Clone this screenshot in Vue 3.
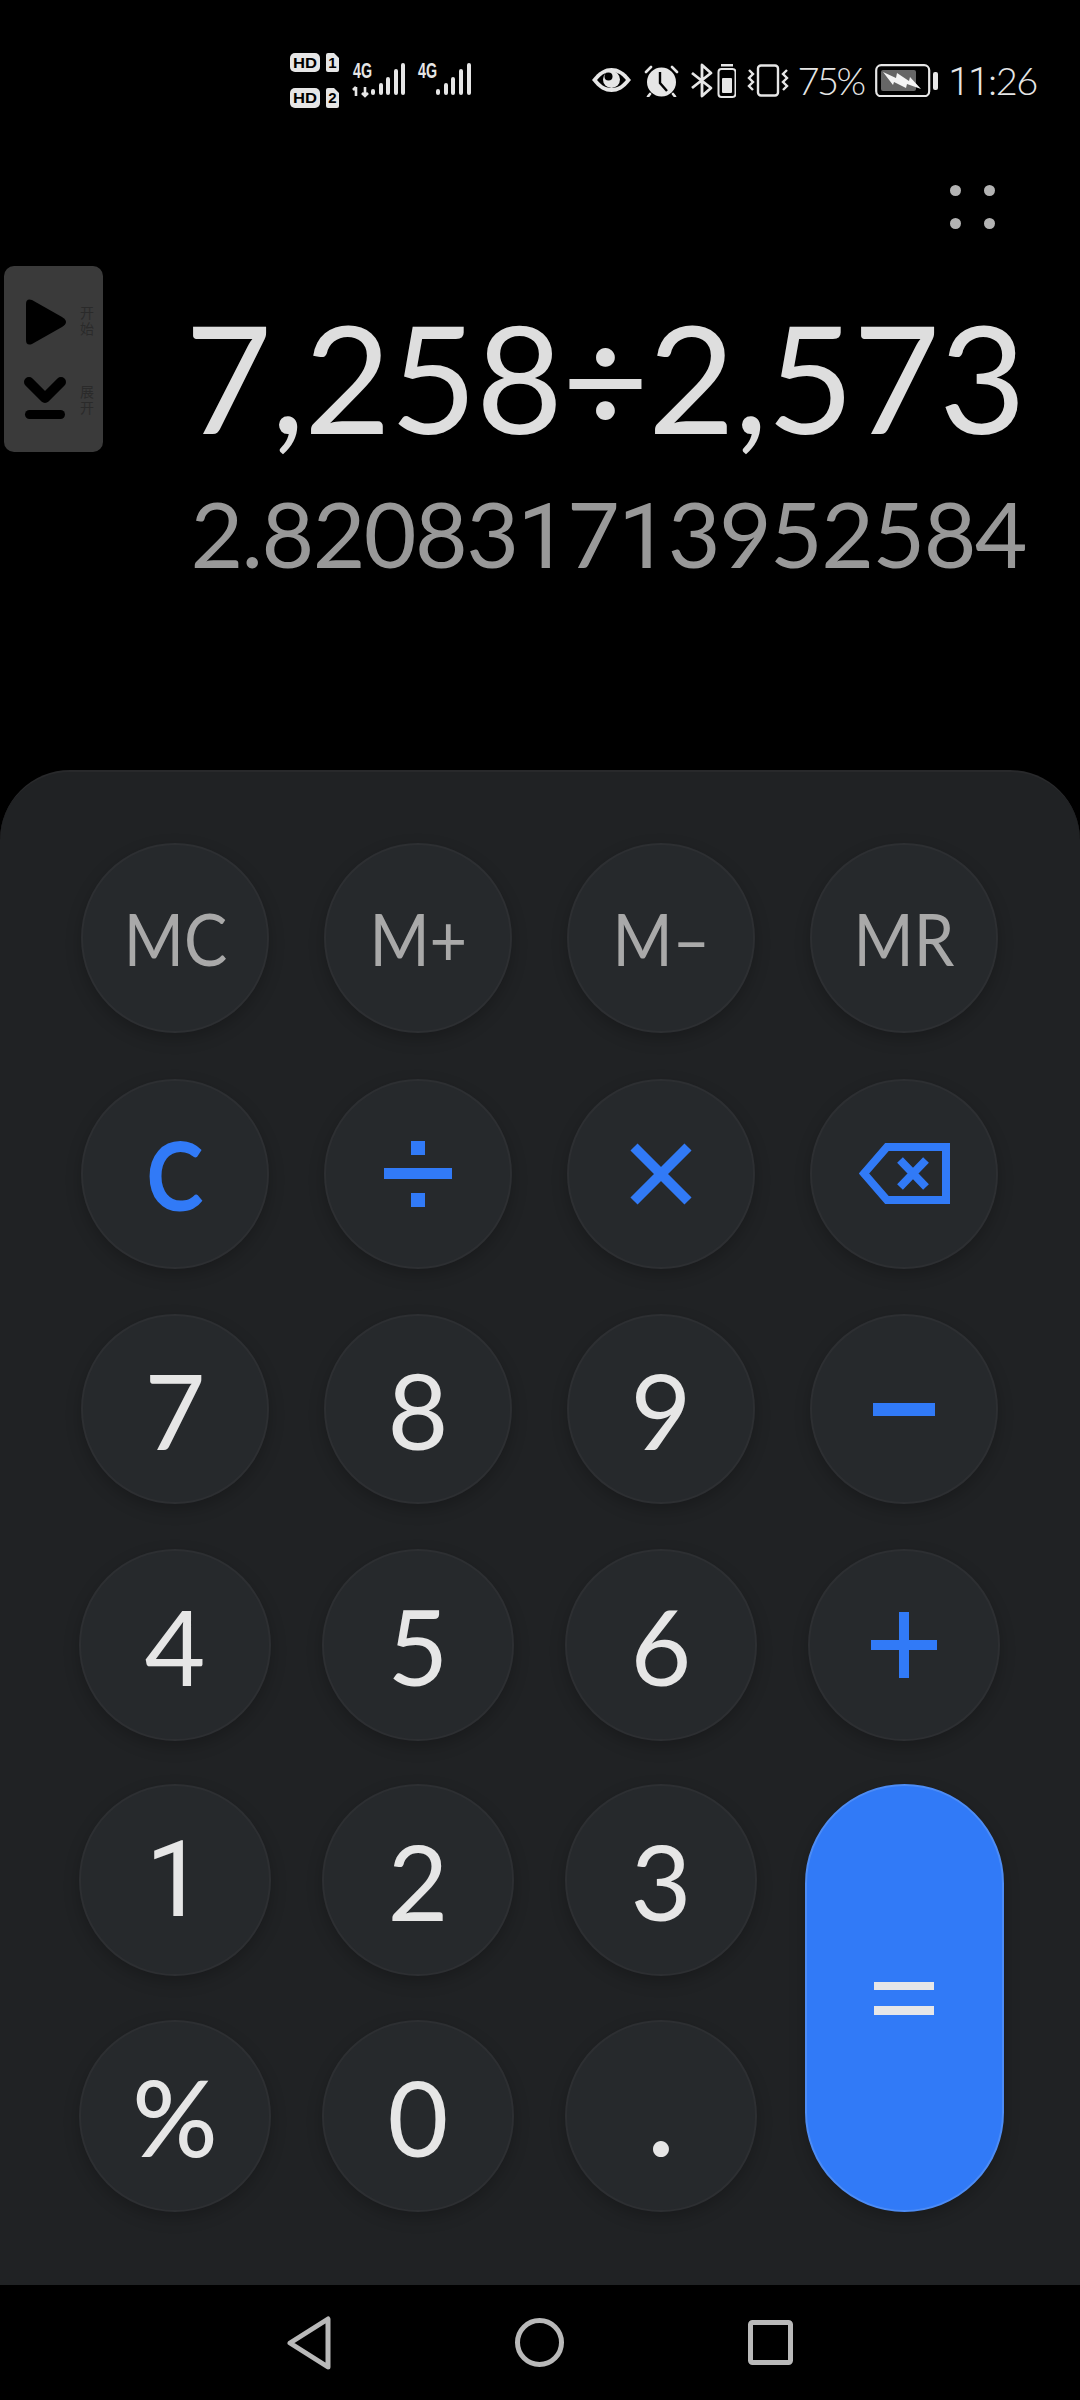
<script setup>
const keys = [
  { t: 'MC', c: 'mem' }, { t: 'M+', c: 'mem' }, { t: 'M–', c: 'mem' }, { t: 'MR', c: 'mem' },
  { t: 'C', c: 'blue' }, { i: 'div' }, { i: 'mul' }, { i: 'back' },
  { t: '7' }, { t: '8' }, { t: '9' }, { i: 'minus' },
  { t: '4', c: 'big' }, { t: '5', c: 'big' }, { t: '6', c: 'big' }, { i: 'plus', c: 'big' },
  { t: '1', c: 'big one' }, { t: '2', c: 'big' }, { t: '3', c: 'big' }, { i: 'eq' },
  { t: '%', c: 'big pct' }, { t: '0', c: 'big' }, { t: '.', c: 'big dot' }
]
const resultChars = '2.820831713952584'.split('')
const timeChars = '11:26'.split('')
</script>

<template>
  <div class="screen">
    <header class="top">
      <div class="status">
        <svg class="sims" width="181" height="60" viewBox="0 0 181 60">
          <rect x="0" y="3" width="30" height="19" rx="5" fill="#e6e6e6" />
          <text x="15" y="18" class="hd" text-anchor="middle" textLength="24" lengthAdjust="spacingAndGlyphs">HD</text>
          <path d="M38 3h6l5 5v12a2 2 0 0 1-2 2H38a2 2 0 0 1-2-2V5a2 2 0 0 1 2-2z" fill="#e6e6e6" />
          <text x="42.5" y="18" class="hd" text-anchor="middle">1</text>
          <rect x="0" y="38" width="30" height="20" rx="5" fill="#e6e6e6" />
          <text x="15" y="53" class="hd" text-anchor="middle" textLength="24" lengthAdjust="spacingAndGlyphs">HD</text>
          <path d="M38 38h6l5 5v13a2 2 0 0 1-2 2H38a2 2 0 0 1-2-2V40a2 2 0 0 1 2-2z" fill="#e6e6e6" />
          <text x="42.5" y="53" class="hd" text-anchor="middle">2</text>
          <text x="63" y="28" class="g4" textLength="19" lengthAdjust="spacingAndGlyphs">4G</text>
          <path d="M66 37v9M63 40l3-3M75 37v9M72 43l3 3l3-3" stroke="#e6e6e6" stroke-width="2.6" fill="none" />
          <g stroke="#e6e6e6" stroke-width="4" stroke-linecap="round">
            <path d="M83 41v2M91 35v8M98 29v14M106 21v22M113 15v28" />
            <path d="M148 41v2M156 35v8M163 29v14M171 21v22M179 15v28" />
          </g>
          <text x="128" y="28" class="g4" textLength="19" lengthAdjust="spacingAndGlyphs">4G</text>
        </svg>

        <div class="status-right">
          <svg class="eye" width="41" height="26" viewBox="0 0 41 26">
            <path d="M1 13C8 4 14 1 20.5 1S33 4 40 13C33 22 27 25 20.5 25S8 22 1 13z" fill="#e6e6e6" />
            <path d="M6 13C11 7 15 5 20.5 5S30 7 35 13C30 19 26 21 20.5 21S11 19 6 13z" fill="#000" />
            <circle cx="20.5" cy="12.5" r="8.5" fill="#e6e6e6" />
            <circle cx="17.5" cy="9.5" r="4" fill="#000" />
          </svg>
          <svg class="alarm" width="35" height="33" viewBox="0 0 35 33">
            <circle cx="17.5" cy="18" r="14.5" fill="#e6e6e6" />
            <path d="M16 8v11l7 8" stroke="#000" stroke-width="2.4" fill="none" />
            <path d="M2 8L7 3M33 8L28 3M6 30l-2 2.5M29 30l2 2.5" stroke="#e6e6e6" stroke-width="2.6" stroke-linecap="round" />
          </svg>
          <svg class="bt" width="45" height="35" viewBox="0 0 45 35">
            <path d="M1 10L20 25L11 33V2L20 10L1 25" stroke="#e6e6e6" stroke-width="2.8" fill="none" stroke-linejoin="round" />
            <rect x="27.5" y="6" width="17" height="28" rx="3" stroke="#e6e6e6" stroke-width="2" fill="none" />
            <rect x="30" y="1" width="12" height="2.5" fill="#e6e6e6" />
            <rect x="31" y="15" width="10" height="15" rx="1" fill="#e6e6e6" />
          </svg>
          <svg class="vib" width="42" height="33" viewBox="0 0 42 33">
            <rect x="11" y="1.5" width="20" height="30" rx="3" stroke="#e6e6e6" stroke-width="2.4" fill="none" />
            <path d="M2 6l4 4l-4 4l4 4l-4 4l4 4M40 6l-4 4l4 4l-4 4l4 4l-4 4" stroke="#e6e6e6" stroke-width="2.4" fill="none" />
          </svg>
          <span class="pct-text">75%</span>
          <svg class="batt" width="63" height="33" viewBox="0 0 63 33">
            <rect x="1.2" y="1.2" width="53" height="31" rx="5" stroke="#e6e6e6" stroke-width="2.2" fill="none" />
            <rect x="6" y="6" width="35" height="21" rx="2" fill="#666" />
            <path d="M8 8L21 14L22 9L34 17L35 13L46 25L32 20L31 24L19 18L18 21z" fill="#f4f4f4" />
            <rect x="58" y="8" width="5" height="18" rx="2" fill="#e6e6e6" />
          </svg>
          <span class="time"><span v-for="(ch, n) in timeChars" :key="n" :class="{ one: ch === '1' }">{{ ch }}</span></span>
        </div>
      </div>

      <div class="menu">
        <svg width="45" height="44" viewBox="0 0 45 44">
          <circle cx="5.5" cy="5.5" r="5.5" /><circle cx="39.5" cy="5.5" r="5.5" />
          <circle cx="5.5" cy="38.5" r="5.5" /><circle cx="39.5" cy="38.5" r="5.5" />
        </svg>
      </div>
      <div class="expr">7,258÷2,573</div>
      <div class="result"><span v-for="(ch, n) in resultChars" :key="n" :class="{ one: ch === '1' }">{{ ch }}</span></div>

      <aside class="float">
        <svg width="50" height="122" viewBox="0 0 50 122">
          <path d="M6 6 Q6 0 12 2 L42 19 Q50 24 42 29 L12 46 Q6 48 6 42z" fill="#000" />
          <path d="M9 84 L25 100 L41 84" stroke="#000" stroke-width="10" fill="none" stroke-linecap="round" stroke-linejoin="round" />
          <rect x="5" y="112" width="40" height="9" rx="4.5" fill="#000" />
        </svg>
        <div class="float-labels"><span>开始</span><span>展开</span></div>
      </aside>
    </header>

    <main class="panel">
      <div class="keys">
        <div v-for="(k, n) in keys" :key="n" class="key" :class="[k.c, k.i === 'eq' ? 'eq' : '']">
          <span v-if="k.t" class="lbl">{{ k.t }}</span>
          <svg v-else-if="k.i === 'div'" width="68" height="66" viewBox="0 0 68 66" class="ico">
            <path d="M27 0h14v14H27zM0 27h68v11H0zM27 52h14v14H27z" />
          </svg>
          <svg v-else-if="k.i === 'mul'" width="62" height="62" viewBox="0 0 62 62" class="ico">
            <path d="M4 4L58 58M58 4L4 58" stroke="#317af7" stroke-width="10" />
          </svg>
          <svg v-else-if="k.i === 'back'" width="91" height="61" viewBox="0 0 91 61" class="ico">
            <path d="M87 4H28L5 30.500L28 57H87z" stroke="#317af7" stroke-width="8" fill="none" />
            <path d="M41 17L67 44M67 17L41 44" stroke="#317af7" stroke-width="8" />
          </svg>
          <svg v-else-if="k.i === 'minus'" width="62" height="13" viewBox="0 0 62 13" class="ico">
            <path d="M0 0h62v13H0z" />
          </svg>
          <svg v-else-if="k.i === 'plus'" width="66" height="66" viewBox="0 0 66 66" class="ico">
            <path d="M28 0h10v28h28v10H38v28H28V38H0V28h28z" />
          </svg>
          <svg v-else-if="k.i === 'eq'" width="60" height="33" viewBox="0 0 60 33">
            <path d="M0 0h60v8H0zM0 24h60v9H0z" fill="#e6e6e8" />
          </svg>
        </div>
      </div>
    </main>

    <nav class="nav">
      <svg width="44" height="54" viewBox="0 0 44 54" class="nav-i">
        <path d="M41 3V51L3 27z" />
      </svg>
      <svg width="49" height="49" viewBox="0 0 49 49" class="nav-i">
        <circle cx="24.500" cy="24.500" r="22" />
      </svg>
      <svg width="45" height="45" viewBox="0 0 45 45" class="nav-i">
        <rect x="2.500" y="2.500" width="40" height="40" rx="2" />
      </svg>
    </nav>
  </div>
</template>

<style scoped>
.screen {
  width: 1080px;
  height: 2400px;
  background: #000;
  display: flex;
  flex-direction: column;
  font-family: Lato, "Noto Sans CJK SC", sans-serif;
  overflow: hidden;
}
.top {
  position: relative;
  height: 770px;
  flex: none;
}
.status {
  height: 60px;
  padding: 50px 43px 0 290px;
  display: flex;
  justify-content: space-between;
  align-items: center;
}
.hd {
  font: 700 15px "Liberation Sans", sans-serif;
  fill: #000;
}
.g4 {
  font: 700 22px "Liberation Sans", sans-serif;
  fill: #e6e6e6;
}
.status-right {
  display: flex;
  align-items: center;
  color: #e6e6e6;
}
.alarm { margin-left: 12px; }
.bt { margin-left: 12px; }
.vib { margin-left: 11px; }
.pct-text {
  margin-left: 8px;
  font-size: 38px;
  font-weight: 300;
  letter-spacing: -2.5px;
}
.batt { margin-left: 11px; }
.time {
  margin-left: 11px;
  font-size: 38px;
  font-weight: 300;
  letter-spacing: -1.4px;
}
.one { font-family: Roboto, sans-serif; }
.menu {
  margin-top: 75px;
  padding-right: 85px;
  display: flex;
  justify-content: flex-end;
  height: 44px;
}
.menu circle { fill: #b3b3b3; }
.expr {
  margin-top: 62px;
  padding-right: 55px;
  text-align: right;
  font-size: 150px;
  line-height: 170px;
  letter-spacing: -1px;
  color: #dedede;
}
.result {
  margin-top: 17px;
  padding-right: 54px;
  text-align: right;
  font-size: 91px;
  line-height: 110px;
  letter-spacing: -1.6px;
  color: #989898;
}
.float {
  position: absolute;
  left: 4px;
  top: 266px;
  width: 99px;
  height: 186px;
  box-sizing: border-box;
  padding: 32px 0 0 16px;
  background: #3a3a3a;
  border-radius: 10px;
  display: flex;
}
.float-labels {
  width: 14px;
  margin-left: 10px;
  display: flex;
  flex-direction: column;
  gap: 47px;
  padding-top: 7px;
  font-size: 14px;
  line-height: 16px;
  color: #2a2a2a;
}
.panel {
  flex: none;
  height: 1515px;
  box-sizing: border-box;
  background: #202224;
  border-radius: 70px 70px 0 0;
  border-top: 2px solid #28292b;
  padding: 71px 75px 0 80px;
}
.keys {
  display: grid;
  grid-template-columns: repeat(4, 190px);
  column-gap: 53px;
  grid-auto-rows: 190px;
  row-gap: 45.6px;
}
.key {
  box-sizing: border-box;
  margin: 0 1px;
  border-radius: 50%;
  background: #26292c;
  border: 2px solid #2d2f32;
  box-shadow: 0 6px 16px rgba(0, 0, 0, .22);
  display: flex;
  align-items: center;
  justify-content: center;
  color: #e6e6e6;
  font-size: 105px;
  font-weight: 400;
}
.big { margin: -1px; }
.lbl { display: block; }
.mem {
  color: #a9a9a9;
  font-size: 72px;
}
.mem .lbl { transform: scaleX(.9); }
.blue {
  color: #317af7;
  font-size: 96px;
  font-weight: 700;
}
.blue .lbl { transform: scaleX(.9); }
.key.one { font-family: Roboto, sans-serif; }
.pct {
  font-size: 106px;
  font-weight: 500;
}
.dot {
  align-items: flex-end;
  padding-bottom: 32px;
  font-weight: 700;
}
.ico { fill: #317af7; }
.eq {
  grid-column: 4;
  grid-row: 5 / span 2;
  width: 199px;
  margin: -1px 0;
  justify-self: center;
  border-radius: 100px;
  background: #317af7;
  border-color: #4d8cf5;
}
.nav {
  flex: 1;
  display: flex;
  justify-content: center;
  align-items: center;
  gap: 184px;
}
.nav-i {
  fill: none;
  stroke: #b9b9b9;
  stroke-width: 5;
  stroke-linejoin: round;
}
</style>
